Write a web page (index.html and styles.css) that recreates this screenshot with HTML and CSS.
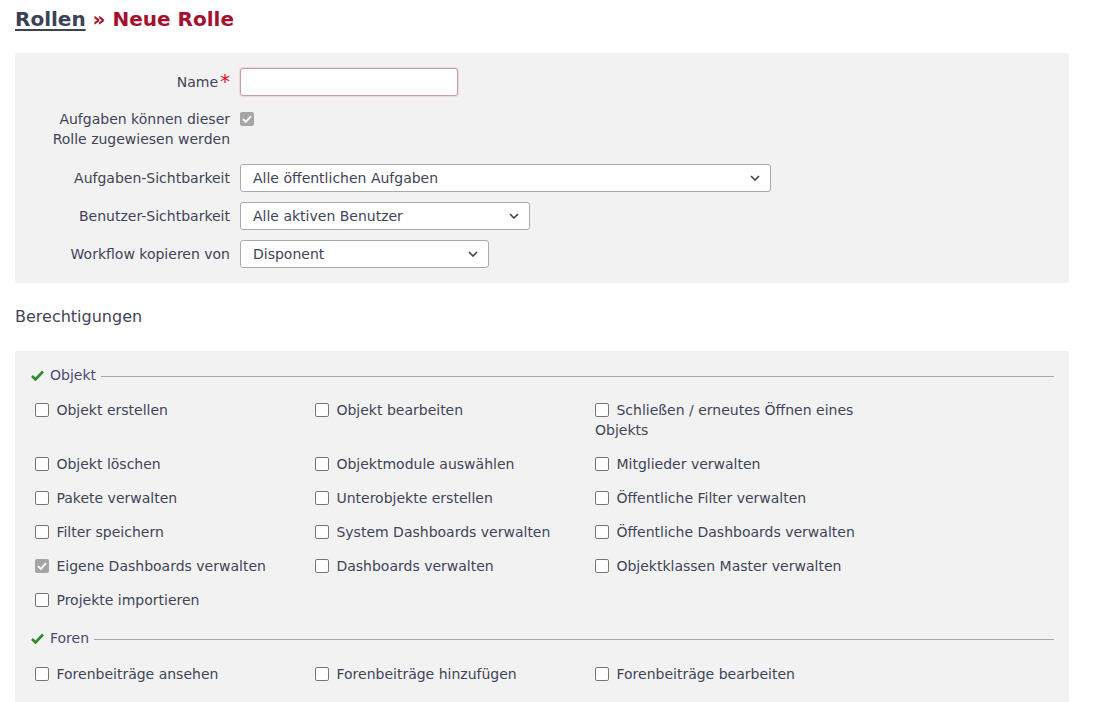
FILE: index.html
```html
<!DOCTYPE html>
<html lang="de">
<head>
<meta charset="utf-8">
<title>Neue Rolle</title>
<link rel="stylesheet" href="styles.css">
</head>
<body>
<h2 class="title"><a href="#" class="crumb">Rollen</a> » Neue Rolle</h2>

<div class="box form-box">
  <div class="row">
    <label class="lbl">Name<span class="req">*</span></label>
    <input class="text-input" type="text" autofocus>
  </div>
  <div class="row row-check">
    <label class="lbl lbl-two">Aufgaben können dieser Rolle zugewiesen werden</label>
    <input type="checkbox" class="cb cb-checked" checked disabled>
  </div>
  <div class="row">
    <label class="lbl">Aufgaben-Sichtbarkeit</label>
    <select class="sel sel-wide"><option>Alle öffentlichen Aufgaben</option></select>
  </div>
  <div class="row">
    <label class="lbl">Benutzer-Sichtbarkeit</label>
    <select class="sel sel-mid"><option>Alle aktiven Benutzer</option></select>
  </div>
  <div class="row">
    <label class="lbl">Workflow kopieren von</label>
    <select class="sel sel-small"><option>Disponent</option></select>
  </div>
</div>

<h3 class="section-title">Berechtigungen</h3>

<div class="box perm-box">
  <div class="legend">
    <svg class="tick" width="13" height="11" viewBox="0 0 13 11"><path d="M1 6 L4.5 9.5 L12 1.5" fill="none" stroke="#2e8b2e" stroke-width="2.6"/></svg>
    <span class="legend-text">Objekt</span>
    <span class="legend-line"></span>
  </div>
  <div class="perm-grid">
    <label class="perm"><input type="checkbox" class="cb"> Objekt erstellen</label>
    <label class="perm"><input type="checkbox" class="cb"> Objekt bearbeiten</label>
    <label class="perm"><input type="checkbox" class="cb"> Schließen / erneutes Öffnen eines Objekts</label>
    <label class="perm"><input type="checkbox" class="cb"> Objekt löschen</label>
    <label class="perm"><input type="checkbox" class="cb"> Objektmodule auswählen</label>
    <label class="perm"><input type="checkbox" class="cb"> Mitglieder verwalten</label>
    <label class="perm"><input type="checkbox" class="cb"> Pakete verwalten</label>
    <label class="perm"><input type="checkbox" class="cb"> Unterobjekte erstellen</label>
    <label class="perm"><input type="checkbox" class="cb"> Öffentliche Filter verwalten</label>
    <label class="perm"><input type="checkbox" class="cb"> Filter speichern</label>
    <label class="perm"><input type="checkbox" class="cb"> System Dashboards verwalten</label>
    <label class="perm"><input type="checkbox" class="cb"> Öffentliche Dashboards verwalten</label>
    <label class="perm"><input type="checkbox" class="cb cb-checked" checked disabled> Eigene Dashboards verwalten</label>
    <label class="perm"><input type="checkbox" class="cb"> Dashboards verwalten</label>
    <label class="perm"><input type="checkbox" class="cb"> Objektklassen Master verwalten</label>
    <label class="perm"><input type="checkbox" class="cb"> Projekte importieren</label>
  </div>

  <div class="legend legend-next">
    <svg class="tick" width="13" height="11" viewBox="0 0 13 11"><path d="M1 6 L4.5 9.5 L12 1.5" fill="none" stroke="#2e8b2e" stroke-width="2.6"/></svg>
    <span class="legend-text">Foren</span>
    <span class="legend-line"></span>
  </div>
  <div class="perm-grid perm-grid-next">
    <label class="perm"><input type="checkbox" class="cb"> Forenbeiträge ansehen</label>
    <label class="perm"><input type="checkbox" class="cb"> Forenbeiträge hinzufügen</label>
    <label class="perm"><input type="checkbox" class="cb"> Forenbeiträge bearbeiten</label>
  </div>
</div>
</body>
</html>
```

FILE: styles.css
```css
html, body {
  margin: 0;
  padding: 0;
  background: #fff;
}
body {
  font-family: "DejaVu Sans", Verdana, sans-serif;
  font-size: 14px;
  color: #3f4457;
  padding: 0 24px 0 15px;
}
.title {
  margin: 0;
  padding-top: 8px;
  height: 53px;
  box-sizing: border-box;
  font-size: 20px;
  line-height: 22px;
  font-weight: bold;
  color: #a5102f;
}
.crumb {
  color: #3b4256;
  text-decoration: underline;
  text-underline-offset: 3px;
  text-decoration-thickness: 2px;
}
.box {
  background: #f2f2f2;
  border-radius: 2px;
}
.form-box {
  padding: 15px 0 15px 0;
}
.row {
  display: flex;
  align-items: flex-start;
  gap: 10px;
  margin-bottom: 10px;
}
.row:last-child {
  margin-bottom: 0;
}
.row-check {
  margin-bottom: 15px;
}
.lbl {
  width: 200px;
  margin-left: 15px;
  text-align: right;
  line-height: 20px;
  padding-top: 4px;
  color: #3f4457;
}
.lbl-two {
  padding-top: 3px;
}
.req {
  color: #e0101f;
  font-size: 20px;
  line-height: 14px;
  margin-left: 2px;
  vertical-align: -1px;
}
.text-input {
  box-sizing: border-box;
  width: 218px;
  height: 28px;
  margin: 0;
  border: 1px solid #c79ca6;
  box-shadow: 0 0 0 1px #efd8dc;
  border-radius: 3px;
  background: #fff;
  padding: 0 8px;
  font: inherit;
  outline: none;
  caret-color: #222;
}
.sel {
  box-sizing: border-box;
  height: 28px;
  margin: 0;
  border: 1px solid #aaa;
  border-radius: 3px;
  background: #fff url("data:image/svg+xml;utf8,<svg xmlns='http://www.w3.org/2000/svg' width='10' height='6' viewBox='0 0 10 6'><path d='M1 1 L5 5 L9 1' fill='none' stroke='%233b4256' stroke-width='1.6'/></svg>") no-repeat right 10px center;
  -webkit-appearance: none;
  appearance: none;
  padding: 0 28px 0 12px;
  font: inherit;
  color: #3f4457;
}
.sel-wide { width: 531px; }
.sel-mid { width: 290px; }
.sel-small { width: 249px; }

.cb {
  -webkit-appearance: none;
  appearance: none;
  box-sizing: border-box;
  width: 14px;
  height: 14px;
  margin: 0 3px 0 0;
  border: 1.5px solid #767676;
  border-radius: 2px;
  background: #fff;
  vertical-align: -2px;
}
.row .cb {
  margin-top: 6px;
}
.cb-checked {
  border: none;
  background: #a5a5a5 url("data:image/svg+xml;utf8,<svg xmlns='http://www.w3.org/2000/svg' width='14' height='14' viewBox='0 0 14 14'><path d='M3 7.2 L5.8 10 L11 4.2' fill='none' stroke='white' stroke-width='1.8'/></svg>") no-repeat center;
}

.section-title {
  margin: 0;
  padding-top: 24px;
  height: 68px;
  box-sizing: border-box;
  font-size: 16px;
  line-height: 20px;
  font-weight: normal;
  color: #3f4457;
}
.perm-box {
  padding: 14px 15px 24px 16px;
}
.legend {
  display: flex;
  align-items: center;
  height: 20px;
  color: #4d4872;
}
.legend-next {
  margin-top: 18px;
}
.tick {
  margin-right: 6px;
}
.legend-text {
  line-height: 20px;
}
.legend-line {
  flex: 1;
  height: 1px;
  background: #a8a8a8;
  margin-left: 5px;
  margin-top: 2px;
}
.perm-grid {
  display: grid;
  grid-template-columns: repeat(3, 280px);
  row-gap: 14px;
  margin-top: 15px;
  padding-left: 4px;
}
.perm-grid-next {
  margin-top: 16px;
}
.perm {
  line-height: 20px;
  color: #3f4457;
}
```
